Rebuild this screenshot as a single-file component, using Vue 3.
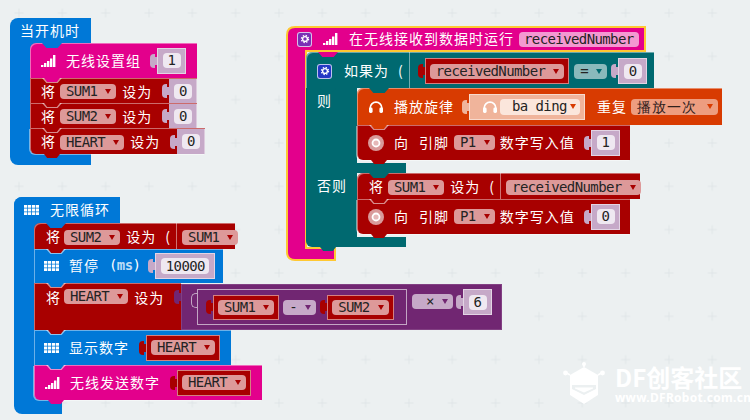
<script setup>
</script>

<template>
  <div class="canvas">
    <svg class="grid" width="750" height="420" aria-hidden="true">
      <defs>
        <pattern id="plus" patternUnits="userSpaceOnUse" x="-2.67" y="-8.67" width="43.33" height="43.33">
          <path d="M17.2 21.67h9M21.67 17.2v9" stroke="#e0e5e7" stroke-width="1" fill="none" />
        </pattern>
      </defs>
      <rect width="750" height="420" fill="url(#plus)" />
    </svg>

    <!-- 当开机时 -->
    <section class="hat start">
      <div class="hat-title"><span class="t">当开机时</span></div>
      <div class="b pink first w167 h35 pl11" style="--notch:#0078d7">
        <svg class="ic-sig" viewBox="0 0 15 12"><path d="M0 10h2.4v2H0zM3 8h2.4v4H3zM6 6h2.4v6H6zM9 3.5h2.4V12H9zM12 0h2.4v12H12z" fill="#fff" /></svg>
        <span class="t m10">无线设置组</span>
        <div class="sock ml-auto mr11 s26 w29"><span class="fld">1</span></div>
      </div>
      <div class="b red low w167 h25 pl11">
        <span class="t">将</span>
        <span class="pill m4">SUM1<i class="caret" /></span>
        <span class="t m6">设为</span>
        <div class="sock full ml-auto w28"><span class="fld">0</span></div>
      </div>
      <div class="b red low w167 h25 pl11">
        <span class="t">将</span>
        <span class="pill m4">SUM2<i class="caret" /></span>
        <span class="t m6">设为</span>
        <div class="sock full ml-auto w28"><span class="fld">0</span></div>
      </div>
      <div class="b red low last w175 h26 pl11">
        <span class="t">将</span>
        <span class="pill m4">HEART<i class="caret" /></span>
        <span class="t m6">设为</span>
        <div class="sock full ml-auto w28"><span class="fld">0</span></div>
      </div>
    </section>

    <!-- 无限循环 -->
    <section class="hat forever">
      <div class="hat-title">
        <svg class="ic-grid" viewBox="0 0 15 10"><path d="M0 0h3.2v2.8H0zM3.9 0h3.2v2.8H3.9zM7.9 0h3.2v2.8H7.9zM11.8 0H15v2.8h-3.2zM0 3.6h3.2v2.8H0zM3.9 3.6h3.2v2.8H3.9zM7.9 3.6h3.2v2.8H7.9zM11.8 3.6H15v2.8h-3.2zM0 7.2h3.2V10H0zM3.9 7.2h3.2V10H3.9zM7.9 7.2h3.2V10H7.9zM11.8 7.2H15V10h-3.2z" fill="#fff" /></svg>
        <span class="t m11">无限循环</span>
      </div>
      <div class="b red low first w201 h26 pl12" style="--notch:#0078d7">
        <span class="t">将</span>
        <span class="pill m3">SUM2<i class="caret" /></span>
        <span class="t m6">设为</span>
        <span class="t m9">(</span>
        <i class="vline" />
        <span class="pill m5">SUM1<i class="caret" /></span>
      </div>
      <div class="b blue w189 h34 pl10">
        <svg class="ic-grid" viewBox="0 0 15 10"><path d="M0 0h3.2v2.8H0zM3.9 0h3.2v2.8H3.9zM7.9 0h3.2v2.8H7.9zM11.8 0H15v2.8h-3.2zM0 3.6h3.2v2.8H0zM3.9 3.6h3.2v2.8H3.9zM7.9 3.6h3.2v2.8H7.9zM11.8 3.6H15v2.8h-3.2zM0 7.2h3.2V10H0zM3.9 7.2h3.2V10H3.9zM7.9 7.2h3.2V10H7.9zM11.8 7.2H15V10h-3.2z" fill="#fff" /></svg>
        <span class="t m10">暂停</span>
        <span class="mono m10">(<b class="ms">ms</b>)</span>
        <div class="sock m15 s26 w60"><span class="fld wide">10000</span></div>
      </div>
      <div class="pair">
        <div class="b red w147 h47 top pl12">
          <span class="t">将</span>
          <span class="pill m3">HEART<i class="caret" /></span>
          <span class="t m6">设为</span>
        </div>
        <div class="sock purple">
          <div class="group">
            <div class="var"><span class="pill">SUM1<i class="caret" /></span></div>
            <span class="pill math m4">-<i class="caret purple-c" /></span>
            <div class="var m11"><span class="pill">SUM2<i class="caret" /></span></div>
          </div>
          <span class="pill math op">×<i class="caret purple-c" /></span>
          <div class="sock m10 s26 w29"><span class="fld">6</span></div>
        </div>
      </div>
      <div class="b blue w197 h35 pl10">
        <svg class="ic-grid" viewBox="0 0 15 10"><path d="M0 0h3.2v2.8H0zM3.9 0h3.2v2.8H3.9zM7.9 0h3.2v2.8H7.9zM11.8 0H15v2.8h-3.2zM0 3.6h3.2v2.8H0zM3.9 3.6h3.2v2.8H3.9zM7.9 3.6h3.2v2.8H7.9zM11.8 3.6H15v2.8h-3.2zM0 7.2h3.2V10H0zM3.9 7.2h3.2V10H3.9zM7.9 7.2h3.2V10H7.9zM11.8 7.2H15V10h-3.2z" fill="#fff" /></svg>
        <span class="t m10">显示数字</span>
        <div class="var m17"><span class="pill">HEART<i class="caret" /></span></div>
      </div>
      <div class="b pink last w228 h35 pl11">
        <svg class="ic-sig" viewBox="0 0 15 12"><path d="M0 10h2.4v2H0zM3 8h2.4v4H3zM6 6h2.4v6H6zM9 3.5h2.4V12H9zM12 0h2.4v12H12z" fill="#fff" /></svg>
        <span class="t m10">无线发送数字</span>
        <div class="var m17"><span class="pill">HEART<i class="caret" /></span></div>
      </div>
    </section>

    <!-- 在无线接收到数据时运行 -->
    <section class="event">
      <svg class="event-shape" width="360" height="236" viewBox="0 0 360 236" aria-hidden="true">
        <path d="M9 1H359V25H20V222H49V234H9Q1 234 1 226V9Q1 1 9 1Z" fill="#e3008c" stroke="#ffc832" stroke-width="2" />
      </svg>
      <div class="event-title">
        <span class="gear purple-gear">
          <svg viewBox="0 0 16 16"><circle cx="8" cy="8" r="3.2" fill="none" stroke="#fff" stroke-width="1.8" /><circle cx="8" cy="8" r="4.8" fill="none" stroke="#fff" stroke-width="1.6" stroke-dasharray="1.9 1.9" /></svg>
        </span>
        <svg class="ic-sig m11" viewBox="0 0 15 12"><path d="M0 10h2.4v2H0zM3 8h2.4v4H3zM6 6h2.4v6H6zM9 3.5h2.4V12H9zM12 0h2.4v12H12z" fill="#fff" /></svg>
        <span class="t m11">在无线接收到数据时运行</span>
        <span class="pill pink-pill m5">receivedNumber</span>
      </div>

      <div class="b teal low first if-head pl11" style="--notch:#e3008c">
        <span class="gear blue-gear">
          <svg viewBox="0 0 16 16"><circle cx="8" cy="8" r="3.2" fill="none" stroke="#fff" stroke-width="1.8" /><circle cx="8" cy="8" r="4.8" fill="none" stroke="#fff" stroke-width="1.6" stroke-dasharray="1.9 1.9" /></svg>
        </span>
        <span class="t m12">如果为</span>
        <span class="t m9">(</span>
        <i class="vline" />
        <div class="var m15"><span class="pill">receivedNumber<i class="caret" /></span></div>
        <span class="pill teal-pill m5">=<i class="caret teal-c" /></span>
        <div class="sock m11 s26 w29"><span class="fld">0</span></div>
      </div>

      <div class="if-row then">
        <div class="arm"><span class="t">则</span></div>
        <div class="stmts">
          <div class="b orange first w365 h37 pl11" style="--notch:#006970">
            <svg class="ic-head" viewBox="0 0 16 12"><path d="M2.2 9V7a5.8 5.8 0 0 1 11.6 0v2" fill="none" stroke="#fff" stroke-width="1.7" /><rect x="1" y="6.5" width="3.6" height="5.5" rx="1.4" fill="#fff" /><rect x="11.4" y="6.5" width="3.6" height="5.5" rx="1.4" fill="#fff" /></svg>
            <span class="t m10">播放旋律</span>
            <div class="sock salmon m15 s26 w116">
              <svg class="ic-head" viewBox="0 0 16 12"><path d="M2.2 9V7a5.8 5.8 0 0 1 11.6 0v2" fill="none" stroke="#fff" stroke-width="1.7" /><rect x="1" y="6.5" width="3.6" height="5.5" rx="1.4" fill="#fff" /><rect x="11.4" y="6.5" width="3.6" height="5.5" rx="1.4" fill="#fff" /></svg>
              <span class="pill sound m2">ba ding<i class="caret or-c" /></span>
            </div>
            <span class="t m12">重复</span>
            <span class="pill repeat m4"><span class="t dark">播放一次</span><i class="caret or-c" /></span>
          </div>
          <div class="b red last w273 h35 pl11">
            <svg class="ic-pin" viewBox="0 0 16 16"><circle cx="8" cy="8" r="8" fill="#d99a9a" /><circle cx="8" cy="8" r="4.4" fill="#fff" /><circle cx="8" cy="8" r="2.6" fill="#e5b8b8" /></svg>
            <span class="t m10">向</span>
            <span class="t m10">引脚</span>
            <span class="pill m5">P1<i class="caret" /></span>
            <span class="t m5">数字写入值</span>
            <div class="sock ml-auto mr10 s26 w29"><span class="fld">1</span></div>
          </div>
        </div>
      </div>
      <div class="bar"></div>
      <div class="if-row else">
        <div class="arm"><span class="t">否则</span></div>
        <div class="stmts">
          <div class="b red low first w283 h26 pl12" style="--notch:#006970">
            <span class="t">将</span>
            <span class="pill m4">SUM1<i class="caret" /></span>
            <span class="t m6">设为</span>
            <span class="t m9">(</span>
            <i class="vline" />
            <span class="pill m5">receivedNumber<i class="caret" /></span>
          </div>
          <div class="b red last w273 h35 pl11">
            <svg class="ic-pin" viewBox="0 0 16 16"><circle cx="8" cy="8" r="8" fill="#d99a9a" /><circle cx="8" cy="8" r="4.4" fill="#fff" /><circle cx="8" cy="8" r="2.6" fill="#e5b8b8" /></svg>
            <span class="t m10">向</span>
            <span class="t m10">引脚</span>
            <span class="pill m5">P1<i class="caret" /></span>
            <span class="t m5">数字写入值</span>
            <div class="sock ml-auto mr10 s26 w29"><span class="fld">0</span></div>
          </div>
        </div>
      </div>
      <div class="bar end"></div>
    </section>

    <!-- watermark -->
    <div class="mark">
      <svg class="mark-logo" viewBox="0 0 42 44" aria-hidden="true">
        <path d="M21 5V1M7 13 2 10M35 13l5-3" stroke="#fff" stroke-width="1.6" fill="none" />
        <circle cx="21" cy="2" r="2" fill="#fff" /><circle cx="2.5" cy="11" r="2.4" fill="#fff" /><circle cx="39.5" cy="11" r="2.4" fill="#fff" />
        <path d="M21 5 35 13V33L21 42 7 33V13Z" fill="#fff" />
        <path d="M9 23H33V27L21 33 9 27Z" fill="#ecf0f1" />
        <path d="M12 25.5H30V26.5L21 30.5 12 26.5Z" fill="#fff" />
      </svg>
      <div class="mark-text">
        <div class="mark-name">DF创客社区</div>
        <div class="mark-url">www.DFRobot.com.cn</div>
      </div>
    </div>
  </div>
</template>

<style>
html, body { margin: 0; background: #ecf0f1; }
</style>

<style scoped>
.canvas {
  position: relative;
  width: 750px;
  height: 420px;
  overflow: hidden;
  background: #ecf0f1;
  font-family: "Noto Sans CJK SC", "Noto Sans", sans-serif;
}
.grid { position: absolute; left: 0; top: 0; }

/* free-canvas placement of the three block stacks */
.hat, .event { position: absolute; box-sizing: border-box; }
.hat { background: #0078d7; border-radius: 8px 0 0 8px; padding-left: 20px; }
.start { left: 10px; top: 18px; width: 81px; padding-bottom: 11px; }
.forever { left: 14px; top: 197px; width: 48px; padding-bottom: 14px; }
.event { left: 286px; top: 26px; width: 360px; height: 236px; padding-left: 20px; }
.event-shape { position: absolute; left: 0; top: 0; }

.hat-title {
  display: flex;
  align-items: center;
  margin-left: -10px;
  height: 25px;
  white-space: nowrap;
}
.forever .hat-title {
  height: 26px;
  width: 106px;
  margin-left: -20px;
  padding-left: 10px;
  box-sizing: border-box;
  background: #0078d7;
  border-radius: 8px 0 0 0;
}
.event-title {
  position: relative;
  display: flex;
  align-items: center;
  height: 26px;
  margin-left: -9px;
  white-space: nowrap;
}

.t {
  font-size: 14px;
  letter-spacing: 1px;
  line-height: 20px;
  color: #fff;
  white-space: nowrap;
  margin-bottom: 2px;
}
.pill .t { margin-bottom: 0; }
.t.dark { color: #30201c; }
.mono {
  font-family: "DejaVu Sans Mono", "Liberation Mono", monospace;
  font-size: 14px;
  letter-spacing: -0.6px;
  color: #fff;
  margin-bottom: 2px;
}
.ms { color: #bcdcf6; }

/* statement block */
.b {
  position: relative;
  display: flex;
  align-items: center;
  box-sizing: border-box;
  flex: none;
  box-shadow: inset 1px 1px 0 rgba(255, 255, 255, 0.42);
}
.b::before {
  content: "";
  position: absolute;
  left: 12px;
  top: 0;
  width: 20px;
  height: 5px;
  z-index: 1;
  background: var(--notch, rgba(255, 255, 255, 0.55));
  clip-path: polygon(0 0, 100% 0, 78% 100%, 22% 100%);
}
.b::after {
  content: "";
  position: absolute;
  left: 14px;
  bottom: -4px;
  width: 16px;
  height: 4px;
  z-index: 2;
  background: inherit;
  clip-path: polygon(0 0, 100% 0, 80% 100%, 20% 100%);
}
.first { border-top-left-radius: 6px; }
.last {
  border-bottom-left-radius: 6px;
  box-shadow: inset 1px 1px 0 rgba(255, 255, 255, 0.42), -1px 1px 0 rgba(255, 255, 255, 0.45);
}
.low { padding-top: 2px; }
.top { align-items: flex-start; padding-top: 5px; }
.top > .t, .top > .pill { margin-bottom: 0; }
.top > .t { margin-top: -1px; }
.top > .pill { margin-top: 1px; }

.pink { background: #e3008c; }
.red { background: #a80000; }
.blue { background: #0078d7; }
.teal { background: #006970; }
.orange { background: #d83b01; }

.pl10 { padding-left: 10px; }
.pl11 { padding-left: 11px; }
.pl12 { padding-left: 12px; }
.h25 { height: 25px; }
.h26 { height: 26px; }
.h34 { height: 34px; }
.h35 { height: 35px; }
.h37 { height: 37px; }
.h47 { height: 47px; }
.w147 { width: 147px; }
.w167 { width: 167px; }
.w175 { width: 175px; }
.w189 { width: 189px; }
.w197 { width: 197px; }
.w201 { width: 201px; }
.w228 { width: 228px; }
.w273 { width: 273px; }
.w283 { width: 283px; }
.w365 { width: 365px; }
.m2 { margin-left: 2px; }
.m3 { margin-left: 3px; }
.m4 { margin-left: 4px; }
.m5 { margin-left: 5px; }
.m6 { margin-left: 6px; }
.m9 { margin-left: 9px; }
.m10 { margin-left: 10px; }
.m11 { margin-left: 11px; }
.m12 { margin-left: 12px; }
.m15 { margin-left: 15px; }
.m17 { margin-left: 17px; }
.ml-auto { margin-left: auto; }
.mr10 { margin-right: 10px; }
.mr11 { margin-right: 11px; }

/* dropdown pill */
.pill {
  display: inline-flex;
  align-items: center;
  flex: none;
  box-sizing: border-box;
  height: 15px;
  padding: 0 5px 0 6px;
  border-radius: 4px;
  background: #dd9999;
  color: #232323;
  font-family: "DejaVu Sans Mono", "Liberation Mono", monospace;
  font-size: 14px;
  letter-spacing: -0.6px;
  line-height: 15px;
  white-space: nowrap;
}
.pink-pill { background: #f499d1; padding: 0 5px; }
.math { background: #c6a9c8; }
.teal-pill { background: #8ab9bc; }
.sound { background: #fbe6dc; width: 80px; padding-left: 12px; height: 16px; }
.repeat { background: #ed9d80; width: 87px; height: 16px; }
.repeat .caret { margin-left: 10px; }
.op { width: 41px; padding-left: 14px; margin: 5px 0 0 5px; }
.caret {
  flex: none;
  width: 0;
  height: 0;
  margin-left: 8px;
  border-left: 3px solid transparent;
  border-right: 3px solid transparent;
  border-top: 5px solid #a80000;
}
.sound .caret { margin-left: 3px; }
.purple-c { border-top-color: #712672; }
.teal-c { border-top-color: #006970; }
.or-c { border-top-color: #d83b01; }

.vline {
  flex: none;
  align-self: stretch;
  width: 1px;
  margin: -2px 0 0 5px;
  background: rgba(255, 255, 255, 0.45);
}

/* value sockets with puzzle knob */
.sock {
  position: relative;
  display: flex;
  align-items: center;
  justify-content: center;
  flex: none;
  box-sizing: border-box;
  background: #c6a9c8;
  box-shadow: inset 0 0 0 1px rgba(255, 255, 255, 0.5);
}
.sock::before, .var::before {
  content: "";
  position: absolute;
  left: -7px;
  top: calc(50% - 7px);
  width: 5px;
  height: 14px;
  border-radius: 4px 0 0 4px;
  background: inherit;
}
.sock::after, .var::after {
  content: "";
  position: absolute;
  left: -3px;
  top: calc(50% - 4px);
  width: 3px;
  height: 8px;
  background: inherit;
}
.s26 { height: 26px; }
.w28 { width: 28px; }
.w29 { width: 29px; }
.w60 { width: 60px; }
.w116 { width: 116px; }
.full { align-self: stretch; margin-top: -1px; box-shadow: inset -1px 0 0 rgba(255, 255, 255, 0.4); }
.salmon { background: #f0b49b; justify-content: flex-start; padding-left: 13px; }
.fld {
  display: block;
  box-sizing: border-box;
  width: 18px;
  height: 15px;
  border-radius: 4px;
  background: #efe8f1;
  color: #232323;
  font-family: "DejaVu Sans Mono", "Liberation Mono", monospace;
  font-size: 14px;
  letter-spacing: -0.6px;
  line-height: 15px;
  text-align: center;
}
.fld.wide { width: 48px; height: 16px; line-height: 16px; }

/* variable reporter */
.var {
  position: relative;
  display: flex;
  align-items: center;
  flex: none;
  box-sizing: border-box;
  height: 26px;
  padding: 0 5px;
  background: #a80000;
  box-shadow: inset 0 0 0 1px rgba(255, 255, 255, 0.5);
}

/* 将 HEART 设为 + math block */
.pair { display: flex; align-items: flex-start; position: relative; }
.sock.purple {
  justify-content: flex-start;
  align-items: flex-start;
  width: 321px;
  height: 46px;
  margin-top: 1px;
  padding: 5px 0 0 16px;
  background: #712672;
  box-shadow: inset 0 0 0 1px rgba(255, 255, 255, 0.12);
}
.sock.purple::before { top: 6px; }
.sock.purple::after { top: 9px; }
.group {
  position: relative;
  display: flex;
  align-items: center;
  box-sizing: border-box;
  width: 210px;
  height: 36px;
  padding-left: 15px;
  border: 1px solid #c3a6c4;
}
.group::before {
  content: "";
  position: absolute;
  left: -7px;
  top: 3px;
  width: 5px;
  height: 13px;
  border: 1px solid #c3a6c4;
  border-right: 0;
  border-radius: 5px 0 0 5px;
}
.group .var { height: 25px; }

/* gear badges */
.gear {
  display: inline-flex;
  align-items: center;
  justify-content: center;
  flex: none;
  box-sizing: border-box;
  width: 15px;
  height: 15px;
  border-radius: 3px;
  border: 1px solid rgba(255, 255, 255, 0.7);
}
.gear svg { width: 12px; height: 12px; display: block; }
.purple-gear { background: #7a2fb5; }
.blue-gear { background: #2438c4; }

.ic-sig { width: 15px; height: 12px; flex: none; display: block; }
.ic-grid { width: 15px; height: 10px; flex: none; display: block; }
.ic-head { width: 16px; height: 12px; flex: none; display: block; }
.ic-pin { width: 16px; height: 16px; flex: none; display: block; }

/* if / else */
.if-head { width: 348px; height: 36px; }
.if-row { position: relative; display: flex; align-items: flex-start; }
.arm {
  flex: none;
  box-sizing: border-box;
  width: 51px;
  padding: 2px 0 0 11px;
  background: #006970;
}
.then .arm { height: 75px; }
.else .arm { height: 64px; padding-top: 2px; }
.arm .t { display: block; }
.stmts { display: flex; flex-direction: column; }
.bar {
  position: relative;
  width: 100px;
  height: 10px;
  background: #006970;
}
.bar.end { border-bottom-left-radius: 6px; }
.bar.end::after {
  content: "";
  position: absolute;
  left: 14px;
  bottom: -4px;
  width: 16px;
  height: 4px;
  background: #006970;
  clip-path: polygon(0 0, 100% 0, 80% 100%, 20% 100%);
}

/* watermark */
.mark {
  position: absolute;
  left: 563px;
  top: 362px;
  display: flex;
  align-items: flex-start;
  color: #fff;
}
.mark-logo { width: 42px; height: 44px; flex: none; display: block; }
.mark-text { margin-left: 10px; white-space: nowrap; }
.mark-name {
  font-size: 24px;
  font-weight: 700;
  line-height: 29px;
  letter-spacing: 0;
}
.mark-url {
  font-family: "Noto Sans", sans-serif;
  font-size: 12px;
  font-weight: 700;
  line-height: 14px;
  letter-spacing: 0.3px;
}
</style>
